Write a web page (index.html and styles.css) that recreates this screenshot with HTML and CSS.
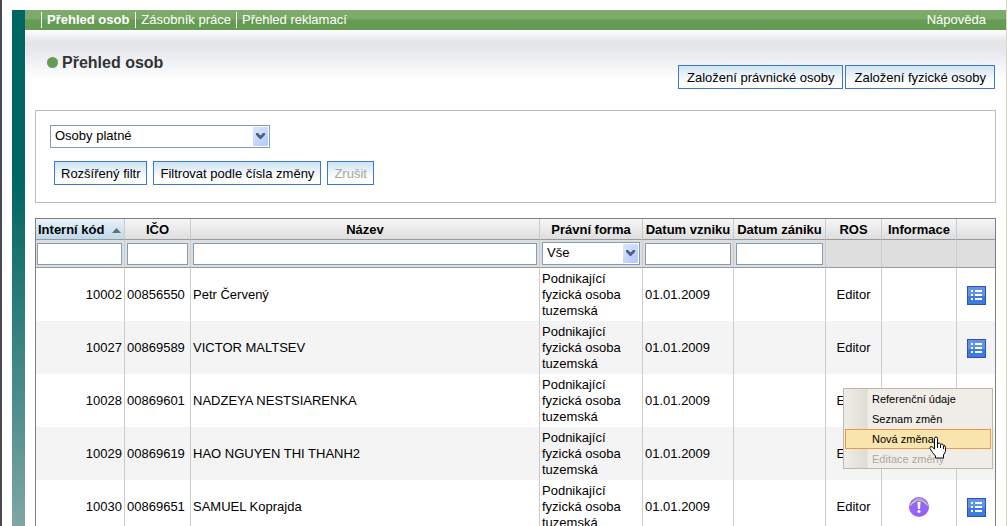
FILE: index.html
```html
<!DOCTYPE html>
<html lang="cs">
<head>
<meta charset="utf-8">
<title>Přehled osob</title>
<link rel="stylesheet" href="styles.css">
</head>
<body>
<svg class="symbols" aria-hidden="true">
  <symbol id="chevron" viewBox="0 0 15 19">
    <path d="M3 6h2l2.500 2.500L10 6h2v2l-4.500 4.500L3 8z" fill="#4d6185"/>
  </symbol>
  <symbol id="list" viewBox="0 0 19 19">
    <rect width="19" height="19" fill="#2f4fbd"/>
    <rect x="1" y="1" width="17" height="9" fill="#6394e3"/>
    <rect x="1" y="10" width="17" height="8" fill="#3c7be0"/>
    <path d="M4 4h2v2H4zM8 4h7v2H8zM4 8h2v2H4zM8 8h7v2H8zM4 12h2v2H4zM8 12h7v2H8z" fill="#fff"/>
  </symbol>
</svg>
<div class="shell">
  <div class="rail"></div>
  <div class="content">
    <header class="topbar">
      <nav class="tabs">
        <a class="tab tab-active" href="#">Přehled osob</a>
        <a class="tab" href="#">Zásobník práce</a>
        <a class="tab" href="#">Přehled reklamací</a>
      </nav>
      <a class="help" href="#">Nápověda</a>
    </header>
    <main class="main">
      <div class="heading">
        <h1 class="title"><span class="dot"></span>Přehled osob</h1>
        <div class="actions">
          <button class="btn" type="button">Založení právnické osoby</button>
          <button class="btn" type="button">Založení fyzické osoby</button>
        </div>
      </div>
      <section class="filter">
        <div class="picker picker-wide">
          <select class="select" aria-label="Platnost osob"><option>Osoby platné</option></select>
          <svg class="arrow"><use href="#chevron"/></svg>
        </div>
        <div class="filter-buttons">
          <button class="btn" type="button">Rozšířený filtr</button>
          <button class="btn" type="button">Filtrovat podle čísla změny</button>
          <button class="btn" type="button" disabled>Zrušit</button>
        </div>
      </section>
      <table class="grid">
        <colgroup>
          <col class="c-code"><col class="c-ico"><col><col class="c-form"><col class="c-from"><col class="c-to"><col class="c-ros"><col class="c-info"><col class="c-menu">
        </colgroup>
        <thead>
          <tr class="names">
            <th class="sorted" scope="col"><span class="sort">Interní kód <svg class="sort-mark" viewBox="0 0 9 5"><path d="M4.500 0L9 5H0z" fill="#6d6d6d"/></svg></span></th>
            <th scope="col">IČO</th>
            <th scope="col">Název</th>
            <th scope="col">Právní forma</th>
            <th scope="col">Datum vzniku</th>
            <th scope="col">Datum zániku</th>
            <th scope="col">ROS</th>
            <th scope="col">Informace</th>
            <th></th>
          </tr>
          <tr class="search">
            <td><input class="field" type="text" aria-label="Interní kód"></td>
            <td><input class="field" type="text" aria-label="IČO"></td>
            <td><input class="field" type="text" aria-label="Název"></td>
            <td><div class="picker"><select class="select" aria-label="Právní forma"><option>Vše</option></select><svg class="arrow"><use href="#chevron"/></svg></div></td>
            <td><input class="field" type="text" aria-label="Datum vzniku"></td>
            <td><input class="field" type="text" aria-label="Datum zániku"></td>
            <td></td><td></td><td></td>
          </tr>
        </thead>
        <tbody>
          <tr>
            <td class="num">10002</td><td>00856550</td><td>Petr Červený</td><td>Podnikající fyzická osoba tuzemská</td><td>01.01.2009</td><td></td><td class="mid">Editor</td><td></td>
            <td class="mid"><button class="list-btn" type="button" aria-label="Nabídka"><svg class="list-icon"><use href="#list"/></svg></button></td>
          </tr>
          <tr>
            <td class="num">10027</td><td>00869589</td><td>VICTOR MALTSEV</td><td>Podnikající fyzická osoba tuzemská</td><td>01.01.2009</td><td></td><td class="mid">Editor</td><td></td>
            <td class="mid"><button class="list-btn" type="button" aria-label="Nabídka"><svg class="list-icon"><use href="#list"/></svg></button></td>
          </tr>
          <tr>
            <td class="num">10028</td><td>00869601</td><td>NADZEYA NESTSIARENKA</td><td>Podnikající fyzická osoba tuzemská</td><td>01.01.2009</td><td></td><td class="mid">Editor</td><td></td>
            <td class="mid menu-cell">
              <button class="list-btn" type="button" aria-label="Nabídka"><svg class="list-icon"><use href="#list"/></svg></button>
              <div class="menu">
                <button class="item" type="button">Referenční údaje</button>
                <button class="item" type="button">Seznam změn</button>
                <button class="item item-on" type="button">Nová změna</button>
                <button class="item" type="button" disabled>Editace změny</button>
                <svg class="pointer" viewBox="0 0 18 23">
                  <path d="M5.500 13V2.500Q5.500 1 7 1T8.500 2.500V8Q9 7 10 7T11.500 8.500Q12 8 13 8T14.500 9.500Q16.500 9 16.500 11.500V15.500L14.500 19V22H6.500V20L3.500 16.500L1 12.500Q0.500 11 2 10.500Q3 10.500 5.500 13" fill="#fff" stroke="#000"/>
                  <path d="M8.500 8v4M11.500 9v3M14.500 10v3" fill="none" stroke="#000"/>
                </svg>
              </div>
            </td>
          </tr>
          <tr>
            <td class="num">10029</td><td>00869619</td><td>HAO NGUYEN THI THANH2</td><td>Podnikající fyzická osoba tuzemská</td><td>01.01.2009</td><td></td><td class="mid">Editor</td><td></td>
            <td class="mid"><button class="list-btn" type="button" aria-label="Nabídka"><svg class="list-icon"><use href="#list"/></svg></button></td>
          </tr>
          <tr>
            <td class="num">10030</td><td>00869651</td><td>SAMUEL Koprajda</td><td>Podnikající fyzická osoba tuzemská</td><td>01.01.2009</td><td></td><td class="mid">Editor</td>
            <td class="mid">
              <svg class="alert" viewBox="0 0 20 20" role="img" aria-label="Upozornění">
                <defs><linearGradient id="shine" x1="0" y1="0" x2="0" y2="1"><stop offset="0" stop-color="#a9c46a"/><stop offset="1" stop-color="#e4edcf"/></linearGradient></defs>
                <circle cx="10" cy="10" r="10" fill="#9563f7"/>
                <path d="M1 9.500a9.200 9.200 0 0 1 18 0Q14.500 4 10 4T1 9.500z" fill="url(#shine)"/>
                <path d="M3 4.800Q6 1 10 1T17 4.800Q13.500 2.800 10 2.800T3 4.800z" fill="#b79bf5"/>
                <path d="M8.400 5h3.200L11 12H9z" fill="#fff"/>
                <circle cx="10" cy="14.500" r="1.500" fill="#fff"/>
              </svg>
            </td>
            <td class="mid"><button class="list-btn" type="button" aria-label="Nabídka"><svg class="list-icon"><use href="#list"/></svg></button></td>
          </tr>
        </tbody>
      </table>
    </main>
  </div>
</div>
</body>
</html>
```
FILE: styles.css
```css
* { box-sizing: border-box; }

body {
  margin: 0;
  height: 100vh;
  overflow: hidden;
  background: #fff;
  color: #000;
  font: 13px/16px "Liberation Sans", Arial, sans-serif;
}

button, input, select { font: inherit; color: inherit; margin: 0; }

.symbols { position: absolute; width: 0; height: 0; }

.shell {
  display: flex;
  height: 100vh;
  padding: 10px 0 0 10px;
  border-left: 2px solid #4a4a4a;
  border-right: 1px solid #d6d2c8;
}

.rail {
  flex: none;
  width: 13px;
  background: linear-gradient(#006664 0, #006664 170px, #4f8f8d 400px, #80a6a5 100%);
}

.content { flex: 1; min-width: 0; }

.topbar {
  display: flex;
  justify-content: space-between;
  align-items: center;
  height: 20px;
  padding: 0 20px 0 16px;
  background: linear-gradient(#7fab6c 0, #7aa968 9px, #659b52 10px, #659b52 100%);
}

.tabs { display: flex; }

.tab, .help { color: #fff; text-decoration: none; }

.tab { padding: 0 5px; border-left: 1px solid #fff; }

.tab-active { padding-right: 6px; font-weight: bold; }

.main {
  padding: 20px 10px 0;
  background: linear-gradient(#fff 0, #e3e5e9 12px, #e6e8ec 20px, #fff 50px) no-repeat;
}

.heading {
  display: flex;
  justify-content: space-between;
  height: 60px;
}

.title {
  display: flex;
  align-items: center;
  gap: 4px;
  height: 25px;
  margin: 0;
  padding-left: 12px;
  color: #333;
  font-size: 16px;
}

.dot { width: 11px; height: 11px; border-radius: 50%; background: #659b52; }

.actions { display: flex; gap: 2px; padding: 15px 1px 0 0; }

.btn {
  height: 24px;
  padding: 1px 6px 0;
  border: 1px solid #3c78d8;
  background: linear-gradient(#cfe4f2, #fff 75%);
  white-space: nowrap;
}

.actions .btn { padding: 1px 8px 0; }

.btn:disabled { color: #aca899; }

.filter {
  height: 93px;
  padding: 14px;
  border: 1px solid #c0bdb6;
}

.filter-buttons { display: flex; gap: 6px; padding: 13px 4px 0; }

.picker { position: relative; height: 23px; }

.picker-wide { width: 220px; }

.select {
  appearance: none;
  width: 100%;
  height: 100%;
  padding: 0 20px 1px 4px;
  border: 1px solid #7f9db9;
  border-radius: 0;
  background: #fff;
}

.arrow {
  position: absolute;
  top: 2px;
  right: 2px;
  width: 15px;
  height: 19px;
  border-radius: 1px;
  background: linear-gradient(135deg, #dce6fd, #b3c9fb);
  pointer-events: none;
}

.grid {
  width: 100%;
  margin-top: 15px;
  table-layout: fixed;
  border: 1px solid #808080;
  border-collapse: separate;
  border-spacing: 0;
}

.c-code { width: 89px; }
.c-ico { width: 66px; }
.c-form { width: 103px; }
.c-from { width: 91px; }
.c-to { width: 92px; }
.c-ros { width: 56px; }
.c-info { width: 75px; }
.c-menu { width: 38px; }

.grid th, .grid td { border-right: 1px solid #ccc; }

.grid th:last-child, .grid td:last-child { border-right: 0; }

.grid th {
  height: 21px;
  padding: 2px 1px 0;
  border-bottom: 1px solid #999;
  background: linear-gradient(#f6f6f6, #dedede);
  white-space: nowrap;
}

.grid .sorted { background: linear-gradient(#e8f1f8, #bdd9ea); }

.sort { display: flex; align-items: center; justify-content: space-between; padding: 0 2px 0 1px; }

.sort-mark { width: 9px; height: 5px; }

.search td {
  height: 28px;
  padding: 2px 2px 2px 1px;
  border-bottom: 1px solid #999;
  background: #dedede;
}

.search td + td { padding-left: 2px; }

.field {
  display: block;
  width: 100%;
  height: 22px;
  padding: 0 2px;
  border: 1px solid #7f9db9;
  background: #fff;
}

.grid tbody td { height: 53px; padding: 3px 2px 2px; }

.grid tbody tr:nth-child(even) td { background: #f4f4f4; }

.grid .num { text-align: right; }

.grid .mid { text-align: center; }

.list-btn {
  display: inline-block;
  padding: 0;
  border: 0;
  background: none;
  vertical-align: middle;
}

.list-icon { display: block; width: 19px; height: 19px; }

.alert { width: 20px; height: 20px; vertical-align: middle; }

.menu-cell { position: relative; }

.menu {
  position: absolute;
  z-index: 1;
  top: 14px;
  right: 2px;
  width: 150px;
  padding: 0 1px;
  border: 1px solid #bdb9b1;
  background: linear-gradient(90deg, #f0ede9 0, #dfdcd4 23px, #f0ede9 24px);
}

.item {
  display: block;
  width: 100%;
  height: 20px;
  padding: 0 0 0 26px;
  border: 1px solid transparent;
  background: none;
  font-size: 11px;
  text-align: left;
}

.item:disabled { height: 19px; color: #aca8a0; }

.item-on { border-color: #e8983e; background: #fae5ae; }

.pointer { position: absolute; top: 47px; left: 85px; width: 18px; height: 23px; }
```
